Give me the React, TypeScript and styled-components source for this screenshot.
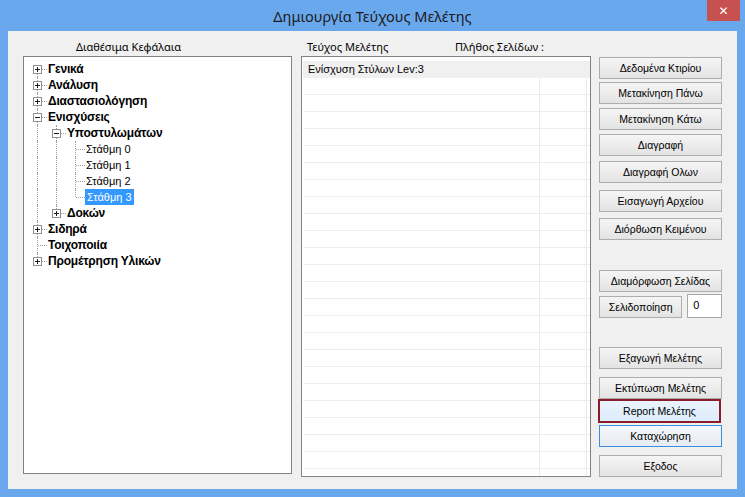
import React from "react"
import styled, { createGlobalStyle, css } from "styled-components"

const GlobalStyle = createGlobalStyle`
  html, body {
    margin: 0;
    padding: 0;
  }
  body {
    background: #6aa8ee;
    font-family: "Liberation Sans", Arial, sans-serif;
    color: #000;
  }
`

type TreeNode = {
  label: string
  bold?: boolean
  expandable?: boolean
  open?: boolean
  selected?: boolean
  children?: TreeNode[]
}

type FlatRow = {
  node: TreeNode
  rails: boolean[]
  up: boolean
  down: boolean
}

const tree: TreeNode[] = [
  { label: "Γενικά", bold: true, expandable: true },
  { label: "Ανάλυση", bold: true, expandable: true },
  { label: "Διαστασιολόγηση", bold: true, expandable: true },
  {
    label: "Ενισχύσεις",
    bold: true,
    expandable: true,
    open: true,
    children: [
      {
        label: "Υποστυλωμάτων",
        bold: true,
        expandable: true,
        open: true,
        children: [
          { label: "Στάθμη 0" },
          { label: "Στάθμη 1" },
          { label: "Στάθμη 2" },
          { label: "Στάθμη 3", selected: true }
        ]
      },
      { label: "Δοκών", bold: true, expandable: true }
    ]
  },
  { label: "Σιδηρά", bold: true, expandable: true },
  { label: "Τοιχοποιία", bold: true },
  { label: "Προμέτρηση Υλικών", bold: true, expandable: true }
]

// walk the open branches, remembering which ancestor levels still need a rail
const flatten = (
  nodes: TreeNode[],
  depth: number,
  rails: boolean[],
  out: FlatRow[]
) => {
  nodes.forEach((node, i) => {
    const last = i === nodes.length - 1
    out.push({ node, rails, up: depth > 0 || i > 0, down: !last })
    if (node.open && node.children) {
      flatten(node.children, depth + 1, [...rails, !last], out)
    }
  })
  return out
}

const Window = styled.div`
  width: 745px;
  height: 497px;
  box-sizing: border-box;
  padding: 0 8px 8px;
  background: #6aa8ee;
  display: flex;
  flex-direction: column;
`

const TitleBar = styled.div`
  height: 31px;
  flex: none;
  display: grid;
  grid-template-columns: 1fr auto 1fr;
  align-items: start;
`

const Title = styled.div`
  grid-column: 2;
  line-height: 32px;
  font-family: "Noto Sans", "Open Sans", sans-serif;
  font-size: 14.5px;
  color: #1b1b1b;
  white-space: nowrap;
`

const CloseButton = styled.div`
  grid-column: 3;
  justify-self: end;
  margin-right: -3px;
  width: 33px;
  height: 21px;
  background: #c75050;
  color: #fff;
  display: flex;
  align-items: center;
  justify-content: center;
  font-family: "DejaVu Sans", sans-serif;
  font-weight: bold;
  font-size: 12px;
`

const Client = styled.div`
  flex: 1;
  background: #f0f0f0;
  padding: 7px 0 0 15px;
  display: flex;
  align-items: flex-start;
`

const Column = styled.div<{ $width: number; $offset?: number }>`
  width: ${p => p.$width}px;
  margin-left: ${p => p.$offset ?? 0}px;
  flex: none;
  display: flex;
  flex-direction: column;
`

const Caption = styled.div<{ $indent?: number }>`
  height: 18px;
  line-height: 18px;
  padding-left: ${p => p.$indent ?? 0}px;
  font-family: "Noto Sans", "Open Sans", sans-serif;
  font-size: 11px;
  color: #000;
  white-space: nowrap;
  display: flex;
`

const CaptionText = styled.span<{ $width?: number }>`
  width: ${p => (p.$width ? `${p.$width}px` : "auto")};
`

const Sunken = styled.div<{ $height: number }>`
  height: ${p => p.$height}px;
  box-sizing: border-box;
  border: 1px solid #828282;
  background: #fff;
  overflow: hidden;
`

const TreeBody = styled.div`
  padding: 4px 0 0 4px;
  display: flex;
  flex-direction: column;
`

const TreeRow = styled.div`
  display: flex;
  height: 16px;
`

const Guide = styled.span<{ $up?: boolean; $down?: boolean; $across?: boolean }>`
  position: relative;
  flex: none;
  width: 19px;
  height: 16px;
  display: flex;
  align-items: flex-start;

  &::before {
    content: "";
    display: ${p => (p.$up || p.$down ? "block" : "none")};
    position: absolute;
    left: 9px;
    top: ${p => (p.$up ? "0" : "8px")};
    bottom: ${p => (p.$down ? "0" : "8px")};
    border-left: 1px dotted #a0a0a0;
  }

  &::after {
    content: "";
    display: ${p => (p.$across ? "block" : "none")};
    position: absolute;
    left: 10px;
    right: 0;
    top: 8px;
    border-top: 1px dotted #a0a0a0;
  }
`

const Toggle = styled.span<{ $open?: boolean }>`
  position: relative;
  z-index: 1;
  box-sizing: border-box;
  width: 9px;
  height: 9px;
  margin: 4px 0 0 5px;
  border: 1px solid #919191;
  background: #fff;

  &::before {
    content: "";
    position: absolute;
    left: 1px;
    top: 3px;
    width: 5px;
    height: 1px;
    background: #1e1e1e;
  }

  &::after {
    content: "";
    display: ${p => (p.$open ? "none" : "block")};
    position: absolute;
    left: 3px;
    top: 1px;
    width: 1px;
    height: 5px;
    background: #1e1e1e;
  }
`

const NodeLabel = styled.span<{ $bold?: boolean; $selected?: boolean }>`
  height: 16px;
  line-height: 16px;
  padding: 0 2px 0 1px;
  white-space: nowrap;
  font-family: "Liberation Sans", Arial, sans-serif;
  ${p =>
    p.$bold
      ? css`
          font-size: 12px;
          font-weight: bold;
          letter-spacing: -0.2px;
        `
      : css`
          font-size: 11px;
        `}
  ${p =>
    p.$selected &&
    css`
      padding-left: 2px;
      background: #3399ff;
      color: #fff;
    `}
`

const ListBody = styled.div`
  padding: 4px 0 0 1px;
  display: flex;
  flex-direction: column;
`

const ListRow = styled.div<{ $shaded?: boolean }>`
  display: grid;
  grid-template-columns: 237px 47px;
  height: 17px;
  box-sizing: border-box;
  ${p =>
    p.$shaded
      ? css`
          background: #f0f0f0;
        `
      : css`
          border-bottom: 1px solid #ececec;
        `}
`

const ListCell = styled.div<{ $shaded?: boolean }>`
  border-right: 1px solid ${p => (p.$shaded ? "transparent" : "#ececec")};
  padding-left: 5px;
  line-height: 17px;
  font-size: 11px;
  white-space: nowrap;
  overflow: hidden;
`

const ButtonStack = styled.div`
  padding-top: 18px;
  display: flex;
  flex-direction: column;
`

type Variant = "plain" | "default" | "focused"

const Button = styled.div<{ $top?: number; $variant?: Variant; $width?: number }>`
  box-sizing: border-box;
  margin-top: ${p => p.$top ?? 0}px;
  width: ${p => (p.$width ? `${p.$width}px` : "100%")};
  height: 22px;
  display: flex;
  align-items: center;
  justify-content: center;
  font-size: 10.5px;
  white-space: nowrap;
  border: 1px solid #adadad;
  background: linear-gradient(#f5f5f5, #e3e3e3);

  ${p =>
    p.$variant === "default" &&
    css`
      height: 24px;
      margin-left: -1px;
      margin-right: -1px;
      border: 2px solid #8a1c2b;
      background: linear-gradient(#eaf4fc, #dcecfc);
    `}

  ${p =>
    p.$variant === "focused" &&
    css`
      border-color: #3c8fe0;
      background: linear-gradient(#f4f7fb, #e6ebf2);
    `}
`

const PageRow = styled.div<{ $top: number }>`
  margin-top: ${p => p.$top}px;
  display: flex;
  align-items: flex-start;
`

const PageInput = styled.div`
  box-sizing: border-box;
  margin-left: 5px;
  width: 35px;
  height: 24px;
  padding: 4px 0 0 5px;
  border: 1px solid #a9a9a9;
  background: #fff;
  font-size: 11px;
`

const topButtons: { label: string; top: number }[] = [
  { label: "Δεδομένα Κτιρίου", top: 1 },
  { label: "Μετακίνηση Πάνω", top: 3 },
  { label: "Μετακίνηση Κάτω", top: 4 },
  { label: "Διαγραφή", top: 4 },
  { label: "Διαγραφή Ολων", top: 5 },
  { label: "Εισαγωγή Αρχείου", top: 7 },
  { label: "Διόρθωση Κειμένου", top: 6 },
  { label: "Διαμόρφωση Σελίδας", top: 30 }
]

export default function App() {
  const rows = flatten(tree, 0, [], [])
  const listRows = Array.from({ length: 25 }, (_, i) => i)

  return (
    <>
      <GlobalStyle />
      <Window>
        <TitleBar>
          <Title>Δημιουργία Τεύχους Μελέτης</Title>
          <CloseButton>✕</CloseButton>
        </TitleBar>
        <Client>
          <Column $width={269}>
            <Caption $indent={53}>Διαθέσιμα Κεφάλαια</Caption>
            <Sunken $height={418}>
              <TreeBody>
                {rows.map(({ node, rails, up, down }, i) => (
                  <TreeRow key={i}>
                    {rails.map((more, j) => (
                      <Guide key={j} $up={more} $down={more} />
                    ))}
                    <Guide $up={up} $down={down} $across>
                      {node.expandable && <Toggle $open={node.open} />}
                    </Guide>
                    <NodeLabel $bold={node.bold} $selected={node.selected}>
                      {node.label}
                    </NodeLabel>
                  </TreeRow>
                ))}
              </TreeBody>
            </Sunken>
          </Column>

          <Column $width={290} $offset={9}>
            <Caption $indent={6}>
              <CaptionText $width={148}>Τεύχος Μελέτης</CaptionText>
              <CaptionText>Πλήθος Σελίδων :</CaptionText>
            </Caption>
            <Sunken $height={421}>
              <ListBody>
                {listRows.map(i => (
                  <ListRow key={i} $shaded={i === 0}>
                    <ListCell $shaded={i === 0}>
                      {i === 0 ? "Ενίσχυση Στύλων Lev:3" : ""}
                    </ListCell>
                    <ListCell $shaded={i === 0} />
                  </ListRow>
                ))}
              </ListBody>
            </Sunken>
          </Column>

          <Column $width={123} $offset={8}>
            <ButtonStack>
              {topButtons.map(b => (
                <Button key={b.label} $top={b.top}>
                  {b.label}
                </Button>
              ))}
              <PageRow $top={2}>
                <Button $top={2} $width={84}>
                  Σελιδοποίηση
                </Button>
                <PageInput>0</PageInput>
              </PageRow>
              <Button $top={29}>Εξαγωγή Μελέτης</Button>
              <Button $top={8}>Εκτύπωση Μελέτης</Button>
              <Button $variant="default">Report Μελέτης</Button>
              <Button $top={2} $variant="focused">
                Καταχώρηση
              </Button>
              <Button $top={8}>Εξοδος</Button>
            </ButtonStack>
          </Column>
        </Client>
      </Window>
    </>
  )
}
